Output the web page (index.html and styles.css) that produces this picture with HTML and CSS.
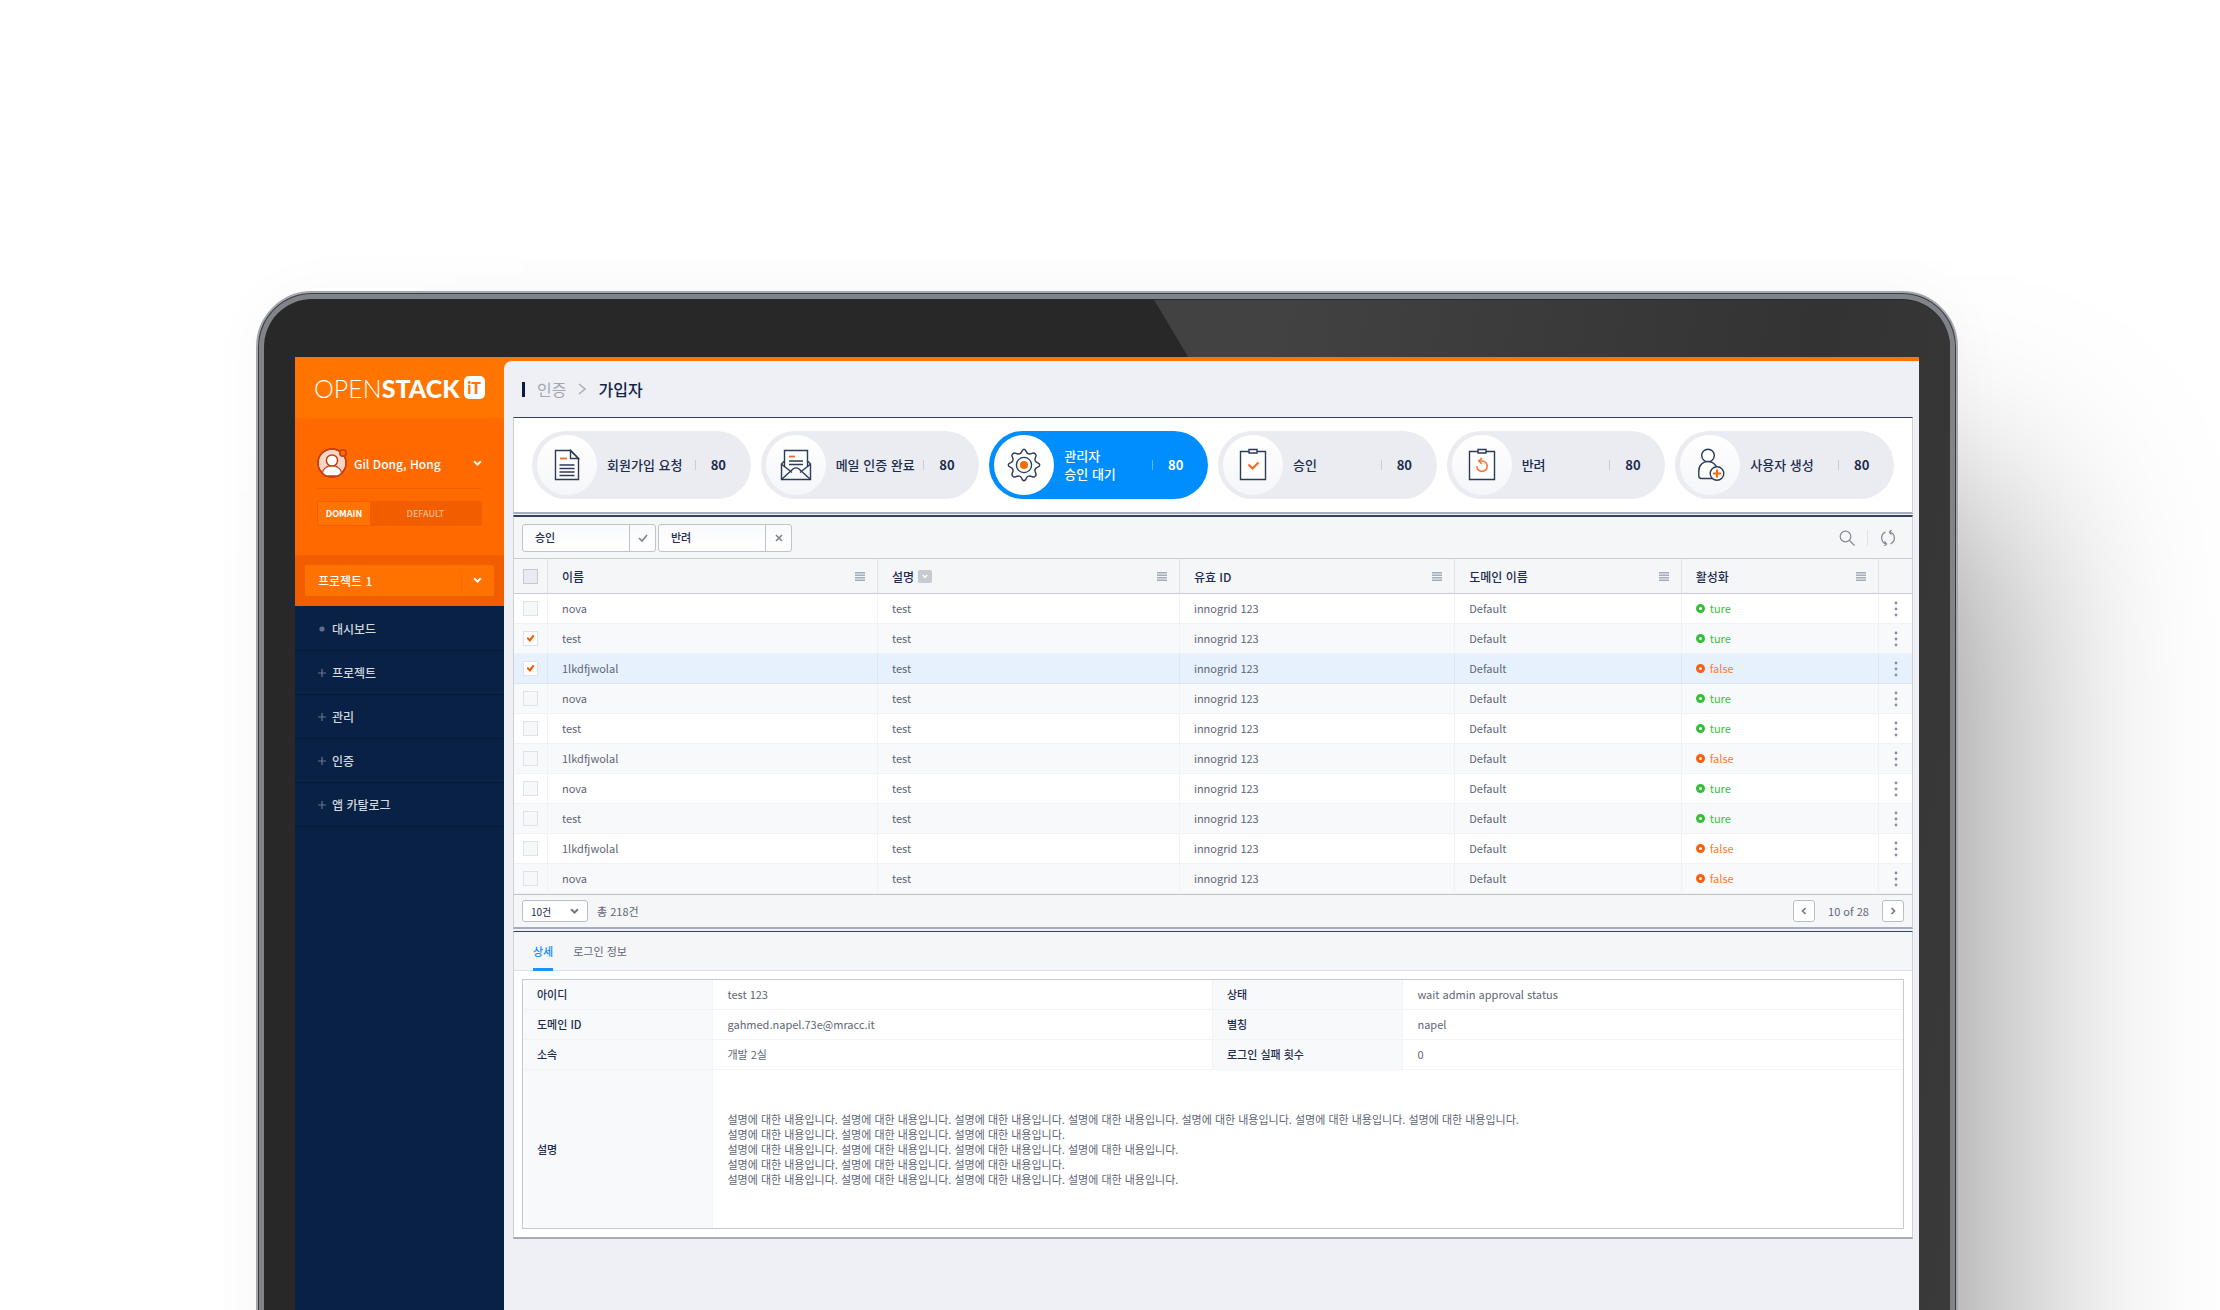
FILE: index.html
```html
<!DOCTYPE html>
<html lang="ko">
<head>
<meta charset="utf-8">
<title>OPENSTACK iT</title>
<link rel="stylesheet" href="styles.css">
</head>
<body>
<svg class="defs" aria-hidden="true">
  <symbol id="menu" viewBox="0 0 10 9"><path d="M0 .75h10M0 3.25h10M0 5.75h10M0 8.25h10" stroke="#a3abb6" stroke-width="1.4"/></symbol>
  <symbol id="kebab" viewBox="0 0 4 16"><circle cx="2" cy="2" r="1.4"/><circle cx="2" cy="8" r="1.4"/><circle cx="2" cy="14" r="1.4"/></symbol>
  <symbol id="down" viewBox="0 0 8 6"><path d="M1 1l3 3 3-3" fill="none" stroke="currentColor" stroke-width="1.8"/></symbol>
</svg>
<div class="stage">
<div class="laptop">
<div class="screen">
  <aside class="sidebar">
    <a class="logo" href="#"><span class="logo-thin">OPEN</span><span class="logo-bold">STACK</span><span class="logo-badge">iT</span></a>
    <section class="account">
      <button class="user" type="button">
        <svg class="avatar" viewBox="0 0 30 30">
          <defs><clipPath id="face"><circle cx="15" cy="15" r="13.6"/></clipPath></defs>
          <circle cx="15" cy="15" r="14" fill="#f9d5c6" stroke="#c63d14" stroke-width="1.4"/>
          <path clip-path="url(#face)" d="M5 28c0-14 20-14 20 0z" fill="#fff" stroke="#c63d14" stroke-width="1.3"/>
          <circle cx="15" cy="12.5" r="5.6" fill="#fff" stroke="#c63d14" stroke-width="1.5"/>
          <circle cx="15" cy="15" r="14" fill="none" stroke="#c63d14" stroke-width="1.4"/>
          <circle cx="26" cy="5" r="3.2" fill="#ff6a00" stroke="#c63d14" stroke-width="1.5"/>
        </svg>
        <span>Gil Dong, Hong</span>
        <svg class="chev" viewBox="0 0 8 6"><use href="#down"/></svg>
      </button>
      <div class="domain"><span class="domain-key">DOMAIN</span><span class="domain-value">DEFAULT</span></div>
    </section>
    <div class="project">
      <button class="project-pick" type="button"><span>프로젝트 1</span><span class="project-arrow"><svg class="chev" viewBox="0 0 8 6"><use href="#down"/></svg></span></button>
    </div>
    <nav class="menu">
      <a class="menu-item" href="#"><svg viewBox="0 0 8 8"><circle cx="4" cy="4" r="2.6" fill="#5f6f8a"/></svg>대시보드</a>
      <a class="menu-item" href="#"><svg viewBox="0 0 8 8"><path d="M0 4h8M4 0v8" stroke="#65748e" stroke-width="1.2"/></svg>프로젝트</a>
      <a class="menu-item" href="#"><svg viewBox="0 0 8 8"><path d="M0 4h8M4 0v8" stroke="#65748e" stroke-width="1.2"/></svg>관리</a>
      <a class="menu-item" href="#"><svg viewBox="0 0 8 8"><path d="M0 4h8M4 0v8" stroke="#65748e" stroke-width="1.2"/></svg>인증</a>
      <a class="menu-item" href="#"><svg viewBox="0 0 8 8"><path d="M0 4h8M4 0v8" stroke="#65748e" stroke-width="1.2"/></svg>앱 카탈로그</a>
    </nav>
  </aside>
  <main class="main">
    <header class="crumbs"><a href="#">인증</a><svg viewBox="0 0 8 12"><path d="M1 1l6 5-6 5" fill="none" stroke="#a9aeb8" stroke-width="1.5"/></svg><h1>가입자</h1></header>

    <section class="panel steps">
      <button class="step" type="button"><span class="step-icon"><svg viewBox="0 0 36 36" fill="none" stroke="#2a3a58" stroke-width="1.4"><path d="M6.500 3.500h15l8 8v21h-23z" fill="#fff"/><path d="M21.500 3.500v8h8z"/><path d="M10.500 18h15M10.500 21.500h15M10.500 25h15M10.500 28.500h15"/><path d="M11 11.500h7" stroke="#f96a1c" stroke-width="1.800"/></svg></span><span class="step-name">회원가입 요청</span><b class="step-count">80</b></button>
      <button class="step" type="button"><span class="step-icon"><svg viewBox="0 0 36 36" fill="none" stroke="#2a3a58" stroke-width="1.400"><path d="M6.500 14l-3 3v15.500h29V17l-3-3"/><path d="M6.500 20V3.500h23V20" fill="#fff"/><path d="M4 17.500l10 8M32 17.500l-10 8M4 32l11-10c2-1.500 4-1.500 6 0l11 10"/><path d="M11 14h14M11 17.500h14"/><path d="M11 9.500h6" stroke="#f96a1c" stroke-width="1.800"/></svg></span><span class="step-name">메일 인증 완료</span><b class="step-count">80</b></button>
      <button class="step step-active" type="button" aria-pressed="true"><span class="step-icon"><svg viewBox="0 0 36 36" fill="none" stroke="#2a3a58" stroke-width="1.400"><path d="M18 2.200C20.400 2.200 19.800 6.600 22.600 6.900C25.200 8 27.500 4.100 29.200 6.800C31.900 8.500 28 10.800 29.100 13.400C29.400 16.200 33.800 15.600 33.800 18C33.800 20.400 29.400 19.800 29.100 22.600C28 25.200 31.900 27.500 29.200 29.200C27.500 31.900 25.200 28 22.600 29.100C19.800 29.400 20.400 33.800 18 33.800C15.600 33.800 16.200 29.400 13.400 29.100C10.800 28 8.500 31.900 6.800 29.200C4.100 27.500 8 25.200 6.900 22.600C6.600 19.800 2.200 20.400 2.200 18C2.200 15.600 6.600 16.200 6.900 13.400C8 10.800 4.100 8.500 6.800 6.800C8.500 4.100 10.800 8 13.400 6.900C16.200 6.600 15.600 2.200 18 2.200z"/><circle cx="18" cy="18" r="7.600"/><circle cx="18" cy="18" r="4" fill="#ff6a00" stroke="none"/></svg></span><span class="step-name">관리자<br>승인 대기</span><b class="step-count">80</b></button>
      <button class="step" type="button"><span class="step-icon"><svg viewBox="0 0 36 36" fill="none" stroke="#2a3a58" stroke-width="1.400"><path d="M5.500 4.500h25v28h-25z" fill="#fff"/><path d="M14 2.500h8v3.500h-8z" fill="#fff"/><path d="M13.500 17.500l4 4 6-6" stroke="#f96a1c" stroke-width="2.200"/></svg></span><span class="step-name">승인</span><b class="step-count">80</b></button>
      <button class="step" type="button"><span class="step-icon"><svg viewBox="0 0 36 36" fill="none" stroke="#2a3a58" stroke-width="1.400"><path d="M5.500 4.500h25v28h-25z" fill="#fff"/><path d="M14 2.500h8v3.500h-8z" fill="#fff"/><path d="M15.500 14H18a5.200 5.200 0 1 1-5.200 5.200" stroke="#f9743a" stroke-width="1.600"/><path d="M18 11l-3.200 3 3.200 3" stroke="#f9743a" stroke-width="1.600"/></svg></span><span class="step-name">반려</span><b class="step-count">80</b></button>
      <button class="step" type="button"><span class="step-icon"><svg viewBox="0 0 36 36" fill="none" stroke="#2a3a58" stroke-width="1.400"><circle cx="16" cy="8.500" r="6.300" fill="#fff"/><path d="M21 31.500H9.500c-2 0-2.700-1-2.700-2.700V24c0-12.500 17.500-12.500 18.200-1" fill="#fff"/><circle cx="25" cy="26.500" r="6.800" fill="#fff"/><path d="M21 26.500h8M25 22.500v8" stroke="#ff6a00" stroke-width="2"/></svg></span><span class="step-name">사용자 생성</span><b class="step-count">80</b></button>
    </section>

    <section class="panel members">
      <div class="toolbar">
        <button class="action" type="button"><span>승인</span><span class="action-mark"><svg viewBox="0 0 10 10"><path d="M1 5l3 3 5-6" fill="none" stroke="#7b838e" stroke-width="1.600"/></svg></span></button>
        <button class="action" type="button"><span>반려</span><span class="action-mark"><svg viewBox="0 0 10 10"><path d="M2 2l6 6M8 2l-6 6" fill="none" stroke="#7b838e" stroke-width="1.600"/></svg></span></button>
        <div class="tools">
          <button class="tool" type="button" aria-label="검색"><svg viewBox="0 0 16 16" fill="none" stroke="#848b96" stroke-width="1.200"><circle cx="6.500" cy="6.500" r="5.300"/><path d="M10.500 10.500l5 5"/></svg></button>
          <button class="tool" type="button" aria-label="새로고침"><svg viewBox="0 0 16 16" fill="none" stroke="#848b96" stroke-width="1.300"><path d="M5.500 2.200A6.300 6.300 0 0 0 6 14M10.500 13.800A6.300 6.300 0 0 0 10 2"/><path d="M4.500 11.500L6.500 14l-2 2M11.500 4.500L9.500 2l2-2"/></svg></button>
        </div>
      </div>
      <table class="grid">
        <colgroup><col class="c-check"><col class="c-name"><col class="c-desc"><col class="c-id"><col class="c-domain"><col><col class="c-more"></colgroup>
        <thead><tr>
          <th><input type="checkbox" aria-label="전체 선택"></th>
          <th><div class="head">이름<svg class="head-menu"><use href="#menu"/></svg></div></th>
          <th><div class="head">설명<span class="sort"><svg class="sort-arrow"><use href="#down"/></svg></span><svg class="head-menu"><use href="#menu"/></svg></div></th>
          <th><div class="head">유효 ID<svg class="head-menu"><use href="#menu"/></svg></div></th>
          <th><div class="head">도메인 이름<svg class="head-menu"><use href="#menu"/></svg></div></th>
          <th><div class="head">활성화<svg class="head-menu"><use href="#menu"/></svg></div></th>
          <th></th>
        </tr></thead>
        <tbody>
          <tr><td><input type="checkbox" aria-label="nova"></td><td>nova</td><td>test</td><td>innogrid 123</td><td>Default</td><td><span class="on">ture</span></td><td><button class="more" type="button" aria-label="더보기"><svg><use href="#kebab"/></svg></button></td></tr>
          <tr><td><input type="checkbox" aria-label="test" checked></td><td>test</td><td>test</td><td>innogrid 123</td><td>Default</td><td><span class="on">ture</span></td><td><button class="more" type="button" aria-label="더보기"><svg><use href="#kebab"/></svg></button></td></tr>
          <tr class="selected"><td><input type="checkbox" aria-label="1lkdfjwolal" checked></td><td>1lkdfjwolal</td><td>test</td><td>innogrid 123</td><td>Default</td><td><span class="off">false</span></td><td><button class="more" type="button" aria-label="더보기"><svg><use href="#kebab"/></svg></button></td></tr>
          <tr><td><input type="checkbox" aria-label="nova"></td><td>nova</td><td>test</td><td>innogrid 123</td><td>Default</td><td><span class="on">ture</span></td><td><button class="more" type="button" aria-label="더보기"><svg><use href="#kebab"/></svg></button></td></tr>
          <tr><td><input type="checkbox" aria-label="test"></td><td>test</td><td>test</td><td>innogrid 123</td><td>Default</td><td><span class="on">ture</span></td><td><button class="more" type="button" aria-label="더보기"><svg><use href="#kebab"/></svg></button></td></tr>
          <tr><td><input type="checkbox" aria-label="1lkdfjwolal"></td><td>1lkdfjwolal</td><td>test</td><td>innogrid 123</td><td>Default</td><td><span class="off">false</span></td><td><button class="more" type="button" aria-label="더보기"><svg><use href="#kebab"/></svg></button></td></tr>
          <tr><td><input type="checkbox" aria-label="nova"></td><td>nova</td><td>test</td><td>innogrid 123</td><td>Default</td><td><span class="on">ture</span></td><td><button class="more" type="button" aria-label="더보기"><svg><use href="#kebab"/></svg></button></td></tr>
          <tr><td><input type="checkbox" aria-label="test"></td><td>test</td><td>test</td><td>innogrid 123</td><td>Default</td><td><span class="on">ture</span></td><td><button class="more" type="button" aria-label="더보기"><svg><use href="#kebab"/></svg></button></td></tr>
          <tr><td><input type="checkbox" aria-label="1lkdfjwolal"></td><td>1lkdfjwolal</td><td>test</td><td>innogrid 123</td><td>Default</td><td><span class="off">false</span></td><td><button class="more" type="button" aria-label="더보기"><svg><use href="#kebab"/></svg></button></td></tr>
          <tr><td><input type="checkbox" aria-label="nova"></td><td>nova</td><td>test</td><td>innogrid 123</td><td>Default</td><td><span class="off">false</span></td><td><button class="more" type="button" aria-label="더보기"><svg><use href="#kebab"/></svg></button></td></tr>
        </tbody>
      </table>
      <footer class="pager">
        <div class="size"><select id="page-size"><option>10건</option></select><svg class="size-arrow"><use href="#down"/></svg></div>
        <label class="total" for="page-size">총 218건</label>
        <button class="page" type="button" aria-label="이전"><svg viewBox="0 0 6 8"><path d="M4.500 1l-3 3 3 3" fill="none" stroke="#6f7783" stroke-width="1.600"/></svg></button>
        <span class="page-now">10 of 28</span>
        <button class="page" type="button" aria-label="다음"><svg viewBox="0 0 6 8"><path d="M1.500 1l3 3-3 3" fill="none" stroke="#6f7783" stroke-width="1.600"/></svg></button>
      </footer>
    </section>

    <section class="panel details">
      <div class="tabs"><button class="tab tab-active" type="button">상세</button><button class="tab" type="button">로그인 정보</button></div>
      <div class="info-wrap">
      <table class="info">
        <colgroup><col class="i-key"><col class="i-value"><col class="i-key"><col></colgroup>
        <tbody>
        <tr><th>아이디</th><td>test 123</td><th>상태</th><td>wait admin approval status</td></tr>
        <tr><th>도메인 ID</th><td>gahmed.napel.73e@mracc.it</td><th>별칭</th><td>napel</td></tr>
        <tr><th>소속</th><td>개발 2실</td><th>로그인 실패 횟수</th><td>0</td></tr>
        <tr class="tall"><th>설명</th><td colspan="3">설명에 대한 내용입니다. 설명에 대한 내용입니다. 설명에 대한 내용입니다. 설명에 대한 내용입니다. 설명에 대한 내용입니다. 설명에 대한 내용입니다. 설명에 대한 내용입니다.<br>설명에 대한 내용입니다. 설명에 대한 내용입니다. 설명에 대한 내용입니다.<br>설명에 대한 내용입니다. 설명에 대한 내용입니다. 설명에 대한 내용입니다. 설명에 대한 내용입니다.<br>설명에 대한 내용입니다. 설명에 대한 내용입니다. 설명에 대한 내용입니다.<br>설명에 대한 내용입니다. 설명에 대한 내용입니다. 설명에 대한 내용입니다. 설명에 대한 내용입니다.</td></tr>
        </tbody>
      </table>
      </div>
    </section>
  </main>
</div>
</div>
</div>
</body>
</html>
```
FILE: styles.css
```css
*, *::before { box-sizing: border-box; }
body { margin: 0; background: #fff; font-family: "Noto Sans CJK KR", "Noto Sans", sans-serif; font-size: 11px; line-height: 15px; color: #5d6675; }
button { margin: 0; padding: 0; border: 0; background: none; font: inherit; color: inherit; text-align: left; cursor: pointer; }
a { color: inherit; text-decoration: none; }
svg { display: block; flex: none; }
.defs { position: absolute; width: 0; height: 0; }

/* Laptop body: runs off the bottom of the window */
.stage { display: flex; height: 100vh; padding: 291px 262px 0 256px; overflow: hidden; }
.laptop { position: relative; flex: 1; display: flex; margin-bottom: -500px; padding: 64px 37px 0; border: 2px solid #a5a7ad; border-radius: 56px 56px 0 0; background: #282828; box-shadow: inset 0 0 0 1px #3b3c41, inset 0 0 0 6px #808388, 130px 130px 190px -70px rgba(0, 0, 0, .34), 0 0 60px rgba(0, 0, 0, .03); }
.laptop::before { content: ""; position: absolute; inset: 7px 6px 0; border-radius: 48px 48px 0 0; background: linear-gradient(100deg, #424242 52%, #333 80%, #3c3c3c 100%); clip-path: polygon(52.8% 0, 100% 0, 100% 100%, 90% 100%, 90% 57px, calc(52.8% + 34px) 57px); }
.screen { position: relative; flex: 1; display: flex; background: #ff7500; }

/* Sidebar */
.sidebar { flex: none; width: 209px; display: flex; flex-direction: column; background: #082145; color: #fff; }
.logo { display: flex; align-items: center; height: 61px; padding-left: 19px; background: #ff7500; font-family: Lato, sans-serif; font-size: 25px; line-height: 30px; }
.logo-thin { font-weight: 300; }
.logo-bold { font-weight: 900; }
.logo-badge { width: 21px; height: 23px; margin-left: 4px; border-radius: 5px; background: #fff; color: #ff7500; font-size: 16px; font-weight: 900; line-height: 23px; text-align: center; }
.account { height: 137px; padding: 20px 22px 0; background: #ff6900; }
.user { display: flex; align-items: center; width: 100%; height: 51px; border-bottom: 1px solid #f45f00; font-size: 12px; font-weight: 500; }
.avatar { width: 30px; height: 30px; margin-right: 7px; }
.chev { width: 9px; height: 7px; margin-left: auto; }
.domain { display: flex; height: 25px; margin-top: 12px; padding: 1px; border-radius: 2px; background: #f25d00; font-size: 9px; line-height: 23px; text-align: center; font-weight: 700; }
.domain-key { width: 52px; background: #ff7300; }
.domain-value { flex: 1; color: #ffb98c; font-weight: 500; }
.project { height: 51px; padding: 10px 10px 0; background: #f25d00; }
.project-pick { display: flex; align-items: center; width: 100%; height: 31px; padding-left: 13px; border-radius: 2px; background: #ff7200; font-size: 12px; font-weight: 500; }
.project-arrow { display: flex; width: 33px; height: 22px; margin-left: auto; padding-right: 12px; border-left: 1px solid #f86a00; align-items: center; }
.menu { padding-top: 1px; color: #d3d7de; font-size: 12px; font-weight: 500; }
.menu-item { display: flex; align-items: center; gap: 6px; height: 44px; padding-left: 23px; border-bottom: 1px dotted #04122c; }
.menu-item svg { width: 8px; height: 8px; }

/* Main column */
.main { flex: 1; min-width: 0; margin-top: 4px; padding: 0 6px 0 9px; border-radius: 8px 0 0 0; background: #eff0f5; }
.crumbs { display: flex; align-items: center; height: 56px; padding-left: 9px; color: #a3a8b3; font-size: 16px; line-height: 24px; }
.crumbs::before { content: ""; width: 3px; height: 15px; margin-right: 12px; background: #0b1c40; }
.crumbs svg { width: 8px; height: 12px; margin: 0 12px; }
.crumbs h1 { margin: 0; color: #14254a; font-size: 16px; font-weight: 500; }
.panel { border: 1px solid #cdd0d7; border-top-color: #33425e; border-bottom: 2px solid #a5adb6; background: #fff; }

/* Approval steps */
.steps { display: grid; grid-template-columns: repeat(6, 1fr); gap: 10px; padding: 13px 18px; }
.step { display: flex; align-items: center; height: 68px; padding: 0 24px 0 5px; border-radius: 34px; background: #ebecf1; color: #1c2c4d; font-size: 13px; line-height: 18px; }
.step-icon { display: flex; align-items: center; justify-content: center; width: 60px; height: 60px; margin-right: 10px; border-radius: 50%; background: linear-gradient(#fff, #f5f6f9); }
.step-icon svg { width: 36px; height: 36px; }
.step-name { flex: 1; white-space: nowrap; font-weight: 500; }
.step-count { position: relative; width: 32px; padding-left: 16px; font-weight: 700; }
.step-count::before { content: ""; position: absolute; left: 0; top: 4px; height: 10px; border-left: 1px solid #c9cdd6; }
.step-active { background: #008eff; color: #fff; }
.step-active .step-icon { background: #fff; }
.step-active .step-count::before { border-color: #5fb8ff; }

/* Member list */
.members { margin-top: 1px; border-top-width: 2px; }
.toolbar { display: flex; align-items: center; gap: 2px; height: 41px; padding: 0 16px 0 8px; background: #f5f6f8; }
.action { display: flex; align-items: center; width: 134px; height: 28px; padding-left: 12px; border: 1px solid #c0c4ca; border-radius: 3px; background: linear-gradient(#f9fafc, #fff); color: #1c2c4d; font-weight: 500; }
.action-mark { display: flex; align-items: center; justify-content: center; width: 26px; height: 26px; margin-left: auto; border-left: 1px solid #c0c4ca; }
.action-mark svg { width: 10px; height: 10px; }
.tools { display: flex; margin-left: auto; }
.tool { padding: 0 12px; }
.tool + .tool { padding-right: 0; border-left: 1px solid #dfe2e7; }
.tool svg { width: 16px; height: 16px; }
.grid, .info { width: 100%; table-layout: fixed; border-collapse: separate; border-spacing: 0; }
.c-check { width: 34px; }
.c-more { width: 33px; }
.c-name { width: 23.6%; }
.c-desc { width: 21.6%; }
.c-id { width: 19.7%; }
.c-domain { width: 16.2%; }
.grid th { height: 36px; padding: 0 12px 0 14px; border: 1px solid #c9cdd3; border-width: 1px 1px 1px 0; border-right-color: #e0e3e8; background: #f5f6f8; color: #1c2c4d; font-size: 12px; font-weight: 500; text-align: left; }
.grid td { height: 30px; padding: 0 14px; border: 1px solid #f0f2f5; border-width: 0 1px 1px 0; }
.grid th:first-child, .grid td:first-child { padding: 0 0 0 9px; }
.grid th:last-child, .grid td:last-child { padding: 0; border-right: 0; }
.grid tr:nth-child(even) td { background: #f8f9fb; }
.grid .selected td { background: #e7f1fe; border-color: #dce6f3; }
.head { display: flex; align-items: center; }
.head-menu { width: 10px; height: 9px; margin-left: auto; }
.sort { display: flex; align-items: center; justify-content: center; width: 14px; height: 13px; margin-left: 4px; border-radius: 2px; background: #c6cad1; color: #fff; }
.sort-arrow { width: 6px; height: 5px; }
input[type="checkbox"] { appearance: none; display: grid; place-items: center; width: 15px; height: 15px; margin: 0; border: 1px solid #dfe2e8; background: #f7f8fa; }
th input[type="checkbox"] { border-color: #c6cad3; background: #e9ebf0; }
input[type="checkbox"]:checked { background: #fff; }
input[type="checkbox"]:checked::before { content: ""; width: 8px; height: 8px; background: #f25d00; clip-path: polygon(0 50%, 18% 32%, 40% 54%, 82% 0, 100% 18%, 44% 94%); }
.on, .off { display: flex; align-items: center; gap: 5px; color: #3bbf3f; }
.off { color: #ff7a33; }
.on::before, .off::before { content: ""; width: 9px; height: 9px; border: 3px solid #35bf39; border-radius: 50%; }
.off::before { border-color: #f9600e; }
.more { display: flex; justify-content: center; width: 100%; fill: #8a919c; }
.more svg { width: 4px; height: 16px; }
.pager { display: flex; align-items: center; height: 33px; padding: 0 8px; border-top: 1px solid #c3c7cd; background: #f5f6f8; }
.size { display: grid; align-items: center; width: 66px; }
.size select { grid-area: 1 / 1; appearance: none; width: 100%; height: 22px; margin: 0; padding: 0 8px; border: 1px solid #b9bec6; border-radius: 3px; background: #fff; color: #1c2c4d; font: 10px "Noto Sans CJK KR", sans-serif; }
.size-arrow { grid-area: 1 / 1; justify-self: end; width: 9px; height: 7px; margin-right: 9px; color: #6f7783; pointer-events: none; }
.total { margin: 0 auto 0 9px; }
.page { display: flex; align-items: center; justify-content: center; width: 22px; height: 22px; border: 1px solid #b9bec6; border-radius: 3px; background: #fff; }
.page svg { width: 6px; height: 8px; }
.page-now { width: 67px; text-align: center; }

/* Details */
.details { margin-top: 2px; }
.tabs { display: flex; gap: 20px; height: 39px; padding-left: 19px; border-bottom: 1px solid #dcdfe4; background: #f5f6f8; }
.tab { height: 39px; padding-top: 2px; border-bottom: 3px solid transparent; }
.tab-active { border-bottom-color: #1e90ff; color: #0a8cff; font-weight: 500; }
.info-wrap { padding: 8px; }
.info { border: 1px solid #c5cad1; }
.i-key { width: 13.8%; }
.i-value { width: 36.2%; }
.info th, .info td { height: 30px; padding: 0 14px; border: 1px solid #f1f3f6; border-width: 0 1px 1px 0; text-align: left; }
.info th { background: #f8f9fb; color: #1c2c4d; font-weight: 500; }
.info tr > :last-child { border-right: 0; }
.info .tall > * { height: 158px; border-bottom: 0; }
```
